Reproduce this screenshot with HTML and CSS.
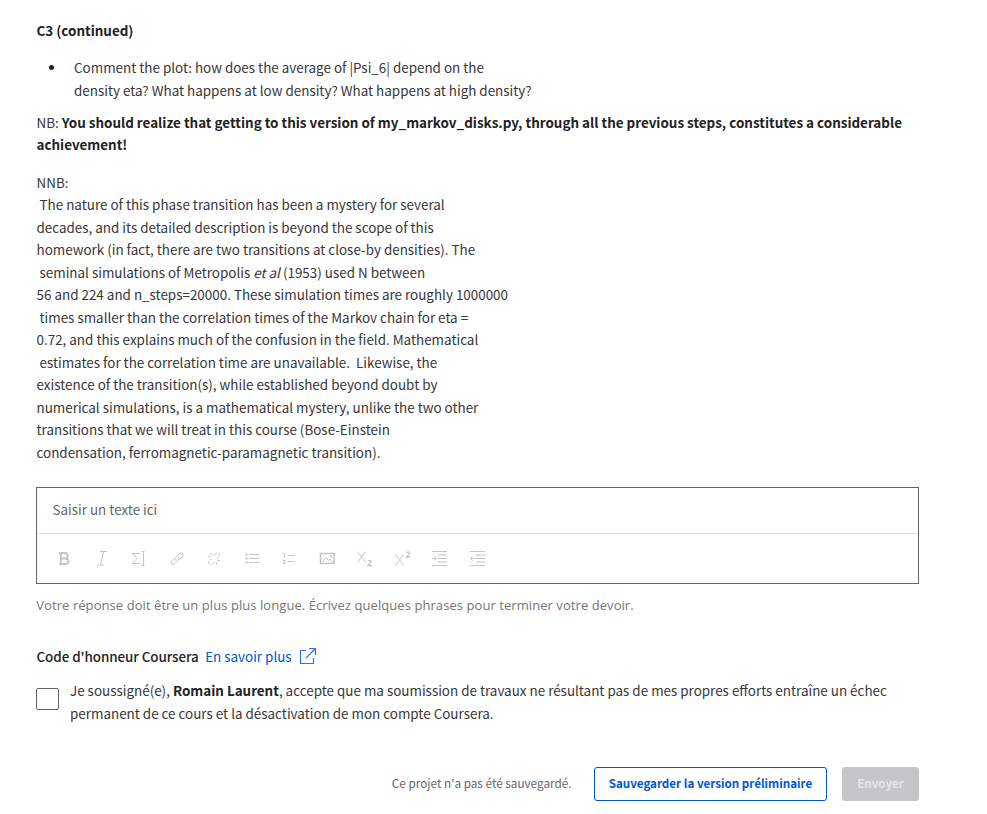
FILE: index.html
```html
<!DOCTYPE html>
<html lang="fr">
<head>
<meta charset="utf-8">
<title>Devoir</title>
<link rel="stylesheet" href="styles.css">
</head>
<body>
<main class="page">
  <section class="prompt">
    <p class="heading"><strong>C3 (continued)</strong></p>
    <ul class="questions">
      <li>Comment the plot: how does the average of |Psi_6| depend on the<br>density eta? What happens at low density? What happens at high density?</li>
    </ul>
    <p class="nb">NB: <strong>You should realize that getting to this version of my_markov_disks.py, through all the previous steps, constitutes a considerable<br>achievement!</strong></p>
    <p class="nnb">NNB:<br>&nbsp;The nature of this phase transition has been a mystery for several<br>decades, and its detailed description is beyond the scope of this<br>homework (in fact, there are two transitions at close-by densities). The<br>&nbsp;seminal simulations of Metropolis <em>et al</em> (1953) used N between<br>56 and 224 and n_steps=20000. These simulation times are roughly 1000000<br>&nbsp;times smaller than the correlation times of the Markov chain for eta =<br>0.72, and this explains much of the confusion in the field. Mathematical<br>&nbsp;estimates for the correlation time are unavailable.&nbsp; Likewise, the<br>existence of the transition(s), while established beyond doubt by<br>numerical simulations, is a mathematical mystery, unlike the two other<br>transitions that we will treat in this course (Bose-Einstein<br>condensation, ferromagnetic-paramagnetic transition).</p>
  </section>

  <section class="editor">
    <div class="input">Saisir un texte ici</div>
    <div class="toolbar">
      <svg class="tool" viewBox="0 0 18 18"><path class="bold" d="M4 3H10C13.500 3 13.500 8.500 10 8.500H6M6 3V14M4 14H10.500C14.500 14 14.500 8.500 10 8.500"/></svg>
      <svg class="tool" viewBox="0 0 18 18"><path d="M7 1.500H14M4 15H11M10.500 1.500L7.500 15"/></svg>
      <svg class="tool" viewBox="0 0 18 18"><path d="M9.500 4.500V3.500H2.500L7 8.500L2.500 13.500H9.500V12.500M11.500 1.500H14.500M11.500 15.500H14.500M13.500 1.500V15.500"/></svg>
      <svg class="tool" viewBox="0 0 18 18"><path d="M8 10.500C6.500 9 7 8 8 7L11 4C13.500 1.500 16.500 4.500 14 7L12 9M10 7C11.500 8.500 11 9.500 10 10.500L7 13.500C4.500 16 1.500 13 4 10.500L6 8.500"/></svg>
      <svg class="tool" viewBox="0 0 18 18"><path class="broken" d="M8.500 5.500L10.500 3.800C13.500 1.500 16 4.500 13.500 7L11.500 9M9.500 12L7.500 13.500C5 15.500 2 13 4.500 10.500L6 9"/><path d="M6 3V5.500M3 6.500H5.500M12.500 10.500H15M11.500 12V14.500"/></svg>
      <svg class="tool" viewBox="0 0 18 18"><path d="M6 4.500H16M6 8.500H16M6 12.500H16"/><path class="thick" d="M2.500 4.500H4.500M2.500 8.500H4.500M2.500 12.500H4.500"/></svg>
      <svg class="tool" viewBox="0 0 18 18"><path d="M7.500 5.500H15M7.500 11.500H15M3 3.500H4.500V7M3 10.500H5V12H3.500V13.500H5.500"/></svg>
      <svg class="tool" viewBox="0 0 18 18"><path class="frame" d="M2.500 3.500H16V13.500H2.500Z"/><path d="M4 12.500L8 7.500L10.500 10.500L12 9L15 12.500"/><circle cx="13" cy="6.500" r="1"/></svg>
      <svg class="tool" viewBox="0 0 18 18"><path d="M2.500 1.500L10.500 12.500M10.500 1.500L2.500 12.500"/><path class="num" d="M13 11.500C13.500 9.800 16.500 10 16 12L13 15.500H17"/></svg>
      <svg class="tool" viewBox="0 0 18 18"><path d="M2.500 4.500L10.500 15.500M10.500 4.500L2.500 15.500"/><path class="num" d="M13.500 3C14 1.300 17 1.500 16.500 3.500L13.500 7H17.500"/></svg>
      <svg class="tool" viewBox="0 0 18 18"><path d="M2 1.500H17M8 8.500H17M2 15.500H17M2 8.500H6M4.500 6.500L6.500 8.500L4.500 10.500"/><path class="pale" d="M8 5H17M8 12H17"/></svg>
      <svg class="tool" viewBox="0 0 18 18"><path d="M2 1.500H17M8 8.500H17M2 15.500H17M2.500 8.500H7M4.500 6.500L2.500 8.500L4.500 10.500"/><path class="pale" d="M8 5H17M8 12H17"/></svg>
    </div>
  </section>
  <p class="hint">Votre réponse doit être un plus plus longue. Écrivez quelques phrases pour terminer votre devoir.</p>

  <section class="honor">
    <div class="honor-title">
      <span class="honor-name">Code d'honneur Coursera</span>
      <a class="link">En savoir plus</a>
      <svg class="external" viewBox="0 0 18 18"><path d="M7 3.500H1.500V16.500H14.500V11M10 1.500H16.500V8M16.500 1.500L7 11"/></svg>
    </div>
    <label class="agree">
      <span class="checkbox"></span>
      <span class="agree-text">Je soussigné(e), <strong>Romain Laurent</strong>, accepte que ma soumission de travaux ne résultant pas de mes propres efforts entraîne un échec<br>permanent de ce cours et la désactivation de mon compte Coursera.</span>
    </label>
  </section>

  <footer class="actions">
    <span class="status">Ce projet n'a pas été sauvegardé.</span>
    <button class="btn save">Sauvegarder la version préliminaire</button>
    <button class="btn send">Envoyer</button>
  </footer>
</main>
</body>
</html>
```
FILE: styles.css
```css
* { box-sizing: border-box; }
body {
  margin: 0;
  background: #fff;
  color: #373737;
  font: 13.43px/22.5px "Noto Sans CJK SC", "Open Sans", sans-serif;
}
p, ul { margin: 0; white-space: nowrap; }
strong { color: #222; }
.page { width: 883px; margin-left: 36px; padding-top: 18.5px; }
.prompt { padding-left: 0.5px; }
.questions { margin-top: 15px; padding-left: 12.5px; list-style: none; }
.questions li { display: flex; }
.questions li::before {
  content: "";
  flex: none;
  width: 5px;
  height: 5px;
  margin: 9px 20px 0 0;
  border-radius: 50%;
  background: #222;
}
.nb { margin-top: 9.5px; }
.nnb { margin-top: 15px; }
.editor {
  height: 97px;
  margin-top: 24px;
  border: 1px solid #666;
}
.input { height: 45px; padding: 10px 15.5px; color: #666; }
.toolbar {
  display: flex;
  gap: 19.5px;
  height: 50px;
  padding: 16px 18px;
  border-top: 1px solid #e1e1e1;
}
.tool { flex: none; width: 18px; height: 18px; fill: none; stroke: #c4c4c4; stroke-width: 1; }
.tool .bold { stroke-width: 1.8; }
.tool .thick { stroke-width: 2; }
.tool .frame { stroke-width: 1.5; }
.tool .num { stroke-width: 1.3; }
.tool .pale { stroke: #e0e0e0; stroke-width: 2; }
.tool .broken { stroke-dasharray: 4 1; }
.hint { margin-top: 10px; padding-left: 0.3px; color: #757575; font: 13px/22px "Open Sans", sans-serif; letter-spacing: 0.065px; }
.honor { margin-top: 29px; }
.honor-title { display: flex; align-items: center; height: 22px; padding-left: 0.5px; white-space: nowrap; }
.honor-name { font-weight: 500; color: #222; letter-spacing: -0.07px; }
.link { margin-left: 6.5px; color: #0056d2; }
.external { width: 18px; height: 18px; margin-left: 7.5px; fill: none; stroke: #2a73e8; stroke-width: 1.2; }
.agree { display: flex; margin-top: 12px; white-space: nowrap; }
.checkbox { flex: none; width: 23px; height: 22px; margin: 9px 11px 0 0; border: 1px solid #666; border-radius: 2px; }
.actions { display: flex; align-items: center; justify-content: flex-end; margin-top: 43px; white-space: nowrap; }
.status { margin-right: 22.5px; padding-bottom: 2px; color: #666; font-size: 11.75px; }
.btn {
  height: 34px;
  padding: 0 0 2px;
  border: 1px solid #0056d2;
  border-radius: 3px;
  background: #fff;
  color: #0056d2;
  font: bold 11.6px/20px "Noto Sans CJK SC", sans-serif;
}
.save { width: 233px; }
.send { width: 77px; margin-left: 15px; border-color: #c4c6c8; background: #c4c6c8; color: #e4e5e6; }
```
